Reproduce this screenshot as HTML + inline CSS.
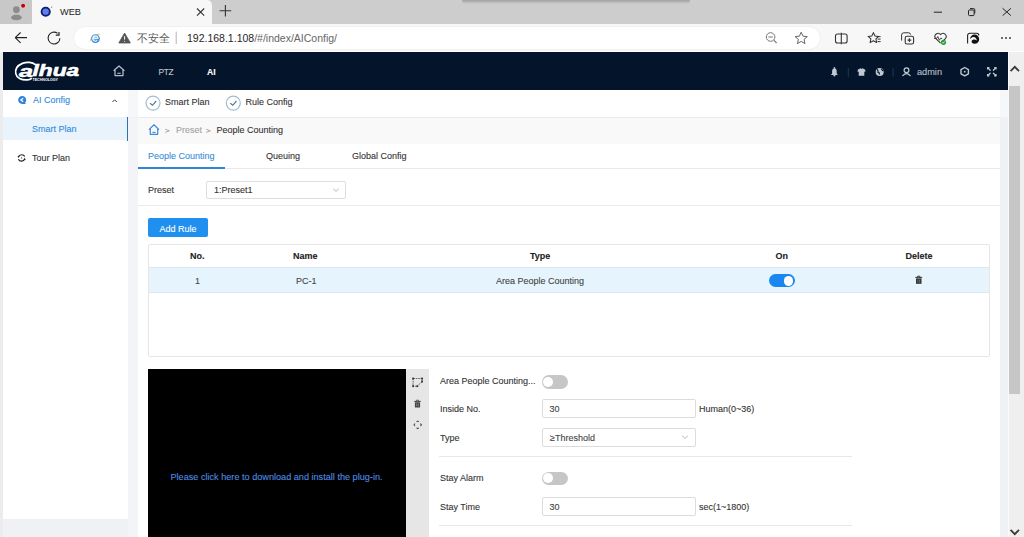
<!DOCTYPE html>
<html><head><meta charset="utf-8">
<style>
*{margin:0;padding:0;box-sizing:border-box}
html,body{width:1024px;height:537px;overflow:hidden;background:#f7f7f7;font-family:"Liberation Sans",sans-serif;color:#333}
.a{position:absolute}
.t{position:absolute;white-space:nowrap;line-height:1;font-size:9px;-webkit-text-stroke:0.1px currentColor}
svg{position:absolute;overflow:visible}
</style></head><body>
<!-- TAB BAR -->
<div class="a" style="left:0;top:0;width:1024px;height:24px;background:#cdcdcd"></div>
<div class="a" style="left:462px;top:0;width:228px;height:4px;background:linear-gradient(#a2a2a2,#cdcdcd);border-radius:0 0 4px 4px"></div>
<div class="a" style="left:0;top:0;width:32px;height:23.5px;background:#c8c8c8;border-radius:0 0 4px 0"></div>
<div class="a" style="left:32px;top:0;width:180px;height:24px;background:#f7f7f7;border-radius:0 5px 0 0"></div>
<svg style="left:0;top:0" width="60" height="24">
  <circle cx="16.4" cy="9.7" r="3.4" fill="#8c8c8c"/>
  <ellipse cx="16.4" cy="17.4" rx="5.4" ry="2.8" fill="#8c8c8c"/>
  <circle cx="23.1" cy="5.7" r="2.6" fill="#f0c8c8" opacity=".6"/><circle cx="23.1" cy="5.7" r="2" fill="#c8000c"/>
  <circle cx="45.7" cy="11.7" r="4.1" fill="#5f7ff0" stroke="#0d1f70" stroke-width="1.9"/>
  <circle cx="51.6" cy="7.1" r="0.7" fill="#777"/>
</svg>
<div class="t" style="left:60px;top:7.5px;font-size:9.2px;color:#222;-webkit-text-stroke:0">WEB</div>
<svg style="left:196px;top:7px" width="10" height="10"><path d="M1 1.5L8.2 8.7M8.2 1.5L1 8.7" stroke="#333" stroke-width="1.1"/></svg>
<svg style="left:218px;top:4px" width="14" height="14"><path d="M7.4 1V12.6M1.6 6.8H13.2" stroke="#333" stroke-width="1.1"/></svg>
<!-- window controls -->
<svg style="left:930px;top:5px" width="90" height="14">
  <path d="M3.8 7.2H12" stroke="#222" stroke-width="1"/>
  <rect x="38.5" y="5" width="5.6" height="5.6" rx="1" fill="none" stroke="#222" stroke-width="1"/>
  <path d="M40 3.6h3.6a1.2 1.2 0 0 1 1.2 1.2v3.6" fill="none" stroke="#222" stroke-width="1"/>
  <path d="M72.6 3.3L80.9 10.6M80.9 3.3L72.6 10.6" stroke="#222" stroke-width="1"/>
</svg>
<!-- toolbar -->
<div class="a" style="left:0;top:24px;width:1024px;height:28px;background:#f7f7f7"></div>
<div class="a" style="left:73.5px;top:27px;width:746px;height:21.5px;background:#fff;border-radius:11px;box-shadow:0 0 0 0.6px #e9e9e9"></div>
<div class="a" style="left:0;top:50.5px;width:1024px;height:1.5px;background:#fff"></div>
<svg style="left:0;top:24px" width="200" height="28">
  <path d="M15.2 13.6H27M15.2 13.6L20.6 8.5M15.2 13.6L20.6 18.9" fill="none" stroke="#222" stroke-width="1.1"/>
  <path d="M59.9 14.2A5.9 5.9 0 1 1 57.6 9.4" fill="none" stroke="#222" stroke-width="1.1"/>
  <path d="M59 8V11.2H55.8" fill="none" stroke="#222" stroke-width="1.2"/>
  <defs><radialGradient id="ieg" cx="0.4" cy="0.35" r="0.7"><stop offset="0" stop-color="#8fd0f8"/><stop offset="1" stop-color="#1f78c8"/></radialGradient></defs>
  <path d="M89.8 17.6Q91 10.4 100.2 10" fill="none" stroke="#e8c048" stroke-width="1" opacity=".75"/>
  <circle cx="95.4" cy="14.6" r="4.4" fill="url(#ieg)"/>
  <path d="M92.8 14.2H98A2.6 2.6 0 1 0 97.3 16.4" fill="none" stroke="#fff" stroke-width="1.1"/>
  <path d="M124.6 9L130.4 19H118.8Z" fill="#555" stroke="#555" stroke-width="0.8" stroke-linejoin="round"/>
  <path d="M124.6 12.2V15.6" stroke="#fff" stroke-width="1"/>
  <circle cx="124.6" cy="17.2" r="0.55" fill="#fff"/>
  <path d="M176.2 7.6V20" stroke="#aaa" stroke-width="0.9"/>
</svg>
<div class="t" style="left:137px;top:33px;font-size:10.5px;color:#5a5a5a;-webkit-text-stroke:0">不安全</div>
<div class="t" style="left:187px;top:33px;font-size:10.5px;color:#666;-webkit-text-stroke:0"><span style="color:#262626">192.168.1.108</span>/#/index/AIConfig/</div>
<svg style="left:760px;top:26px" width="264" height="24">
  <circle cx="10.6" cy="11" r="4.3" fill="none" stroke="#777" stroke-width="1"/>
  <path d="M8.4 11H12.8M13.8 14.2L16.6 17" stroke="#777" stroke-width="1.1"/>
  <path d="M41.2 6.2L43 10.2L47.3 10.6L44 13.4L45 17.6L41.2 15.4L37.4 17.6L38.4 13.4L35.1 10.6L39.4 10.2Z" fill="none" stroke="#666" stroke-width="1" stroke-linejoin="round"/>
  <rect x="75.5" y="8" width="11.6" height="9" rx="2" fill="none" stroke="#333" stroke-width="1.1"/>
  <path d="M81.3 6.8V18.2" stroke="#333" stroke-width="1.1"/>
  <path d="M113.4 6.6L115 10L118.7 10.4L115.9 12.9L116.7 16.6L113.4 14.7L110.1 16.6L110.9 12.9L108.1 10.4L111.8 10Z" fill="none" stroke="#333" stroke-width="1.05" stroke-linejoin="round"/>
  <path d="M116.8 10.6H120.6M117.6 13.1H120.6M117.6 15.6H120.6" stroke="#333" stroke-width="1"/>
  <path d="M141.6 14.6V9A2.2 2.2 0 0 1 143.8 6.8H148.6A2 2 0 0 1 150.6 8.6" fill="none" stroke="#333" stroke-width="1"/>
  <rect x="145.2" y="10.2" width="8.4" height="7.8" rx="1.8" fill="#f7f7f7" stroke="#333" stroke-width="1.1"/>
  <path d="M149.4 12.2V16M147.5 14.1H151.3" stroke="#333" stroke-width="1.1"/>
  <path d="M180.6 17.2L175.6 12.4A3 3 0 0 1 180.6 8.6A3 3 0 0 1 185.4 12.6L183.6 14.4" fill="none" stroke="#333" stroke-width="1.05" stroke-linejoin="round"/>
  <path d="M174.2 12.4H176.6L177.8 10.6L179.4 14.2L180.6 12.4H182.2" fill="none" stroke="#333" stroke-width="0.95"/>
  <circle cx="183.5" cy="16.3" r="2.6" fill="#2a9d3a"/>
  <path d="M182.3 16.3L183.2 17.2L184.7 15.5" fill="none" stroke="#fff" stroke-width="0.8"/>
  <path d="M207.6 17.6V9.4A2.2 2.2 0 0 1 209.8 7.2H216.6A2.2 2.2 0 0 1 218.8 9.4" fill="none" stroke="#222" stroke-width="1.1"/>
  <path d="M210 13.2A4.6 4.6 0 1 1 214.6 17.8C212.4 17.8 211.4 16.4 211.6 15C212.1 13.4 215.2 12.8 216.8 14.6C216.6 11.6 214 10.2 212 11.4C210.8 12 210.2 12.6 210 13.2Z" fill="#111"/>
  <circle cx="242" cy="12" r="0.95" fill="#333"/><circle cx="246" cy="12" r="0.95" fill="#333"/><circle cx="250" cy="12" r="0.95" fill="#333"/>
</svg>
<!-- PAGE -->
<div class="a" style="left:0;top:52px;width:3px;height:485px;background:#ececec"></div>
<div class="a" style="left:3px;top:52px;width:1005px;height:485px;background:#eff1f4"></div>
<div class="a" style="left:3px;top:52.3px;width:1005px;height:37.5px;background:#04152b"></div>
<!-- logo -->
<svg style="left:0;top:52px" width="100" height="38">
  <path d="M35.4 12.6C32.5 10 26.8 9.6 22.4 11.4C17.6 13.4 15 17.4 15.8 21.6C16.6 25.8 21.4 28.4 27.4 27.9C29 27.8 30.4 27.4 31.2 26.6" fill="none" stroke="#fff" stroke-width="1.7" stroke-linecap="round"/>
  <text x="19" y="24.8" font-family="Liberation Sans" font-weight="bold" font-style="italic" font-size="16.5" fill="#fff" stroke="#fff" stroke-width="0.5" textLength="14" lengthAdjust="spacingAndGlyphs">a</text>
  <text x="32.6" y="24.4" font-family="Liberation Sans" font-weight="bold" font-style="italic" font-size="17.2" fill="#fff" stroke="#fff" stroke-width="0.6" textLength="46.5" lengthAdjust="spacingAndGlyphs">lhua</text>
  <text x="32.5" y="29.4" font-family="Liberation Sans" font-weight="bold" font-size="3.2" fill="#fff" textLength="25.5" lengthAdjust="spacingAndGlyphs">TECHNOLOGY</text>
</svg>
<svg style="left:100px;top:52px" width="130" height="38">
  <path d="M13.6 18.8L19 14L24.4 18.8M15 17.6V23.6H23V17.6" fill="none" stroke="#b5bdc8" stroke-width="1.25" stroke-linejoin="round"/>
  <path d="M17.3 21.3H20.7" stroke="#b5bdc8" stroke-width="1.1"/>
</svg>
<div class="t" style="left:158.6px;top:68.2px;font-size:8.4px;letter-spacing:-0.45px;color:#bcc4cf">PTZ</div>
<div class="t" style="left:207px;top:68px;font-size:8.6px;color:#fff;font-weight:bold">AI</div>
<svg style="left:820px;top:52px" width="188" height="38">
  <path d="M14.4 16.2C12.7 16.2 12.1 17.8 12.1 19.6V21.6L10.9 23H17.9L16.7 21.6V19.6C16.7 17.8 16.1 16.2 14.4 16.2Z" fill="#c0c8d4"/>
  <circle cx="14.4" cy="15.9" r="0.8" fill="#c0c8d4"/><circle cx="14.4" cy="23.6" r="1" fill="#c0c8d4"/>
  <path d="M28.3 16V24.7" stroke="#27364a" stroke-width="1"/>
  <path d="M38 17.4L40.6 16.3Q41.5 17.3 42.4 16.3L45 17.4L45.6 19.4L44.3 19.8V23.8H38.7V19.8L37.4 19.4Z" fill="#c0c8d4"/>
  <circle cx="59.7" cy="19.9" r="4" fill="#c0c8d4"/>
  <path d="M57 17.2Q58.5 18.7 58 20.2Q59.6 20.5 59.6 22.4M61.4 16.8Q62.2 18.6 63.5 18.8" fill="none" stroke="#04152b" stroke-width="1.2"/>
  <path d="M73.1 16V24.7" stroke="#27364a" stroke-width="1"/>
  <circle cx="86.5" cy="18.3" r="2.4" fill="none" stroke="#c0c8d4" stroke-width="1.2"/>
  <path d="M82.8 23.6Q86.5 19.8 90.2 23.6" fill="none" stroke="#c0c8d4" stroke-width="1.2" stroke-linecap="round"/>
  <path d="M144.7 15.5L148.4 17.6V21.8L144.7 23.9L141 21.8V17.6Z" fill="none" stroke="#c0c8d4" stroke-width="1.4" stroke-linejoin="round"/>
  <circle cx="144.7" cy="19.7" r="0.9" fill="#c0c8d4"/>
  <path d="M167.6 15.6L170.2 18.2M176 15.6L173.4 18.2M167.6 23.8L170.2 21.2M176 23.8L173.4 21.2" stroke="#c0c8d4" stroke-width="1.3" stroke-linecap="round"/>
  <path d="M167.6 15.6H169.4M167.6 15.6V17.4M176 15.6H174.2M176 15.6V17.4M167.6 23.8H169.4M167.6 23.8V22M176 23.8H174.2M176 23.8V22" stroke="#c0c8d4" stroke-width="1.2"/>
</svg>
<div class="t" style="left:917px;top:67.5px;font-size:9.2px;color:#b8c0cc">admin</div>
<!-- scrollbar -->
<div class="a" style="left:1008px;top:52px;width:16px;height:485px;background:#efefef;border-left:1.5px solid #fafafa"></div>
<div class="a" style="left:1009.2px;top:85.5px;width:10.8px;height:308px;background:#c6c6c6"></div>
<svg style="left:1008px;top:52px" width="16" height="485">
  <path d="M2.6 19.2L6.8 14.8L11 19.2" fill="none" stroke="#3a3a3a" stroke-width="1.8"/>
  <path d="M2.6 477.8L6.8 482.2L11 477.8" fill="none" stroke="#3a3a3a" stroke-width="1.8"/>
</svg>
<!-- sidebar -->
<div class="a" style="left:3px;top:90px;width:125px;height:429px;background:#fff"></div>
<div class="a" style="left:3px;top:117px;width:125px;height:23px;background:#e9f3fc"></div>
<div class="a" style="left:126.5px;top:117px;width:1.5px;height:23.5px;background:#2f72b4"></div>
<svg style="left:0;top:90px" width="128" height="80">
  <path d="M22.2 6C24.6 6 26.2 7.8 26.2 10C26.2 11.2 25.7 12.2 25 12.9L26 13.9H22.2C19.8 13.9 18.2 12.1 18.2 10C18.2 7.8 19.8 6 22.2 6Z" fill="#2f82d9"/>
  <path d="M23.2 8.2L20.9 10L23.2 11.8" fill="none" stroke="#fff" stroke-width="1.2"/>
  <path d="M112.4 12L114.6 9.8L116.8 12" fill="none" stroke="#444" stroke-width="1"/>
  <path d="M18.4 66.8A3.5 3.3 0 0 1 24.8 66.6M24.8 69.1A3.5 3.3 0 0 1 18.4 69.3" fill="none" stroke="#222" stroke-width="1.2"/>
  <path d="M17.4 66.1L19.6 66.3L18.6 68.1ZM25.8 69.8L23.6 69.6L24.6 67.8Z" fill="#222"/>
  <path d="M21.4 67.2L21.8 68.6" stroke="#444" stroke-width="0.9"/>
</svg>
<div class="t" style="left:33px;top:96px;color:#2f8ae0">AI Config</div>
<div class="t" style="left:32px;top:125px;color:#2f8ae0">Smart Plan</div>
<div class="t" style="left:32px;top:154px;color:#333">Tour Plan</div>

<!-- step bar -->
<div class="a" style="left:128px;top:90px;width:880px;height:27px;background:#f6f7f9"></div>
<div class="a" style="left:138px;top:90px;width:862px;height:27px;background:#fff"></div>
<div class="a" style="left:138px;top:117px;width:862px;height:1.5px;background:#eaebee"></div>
<svg style="left:128px;top:90px" width="140" height="27">
  <circle cx="25" cy="13.1" r="7" fill="none" stroke="#a3bccf" stroke-width="1.2"/>
  <path d="M22 13.2L24.5 15.3L28.2 11" fill="none" stroke="#55769a" stroke-width="1.15"/>
  <circle cx="105.3" cy="13.1" r="7" fill="none" stroke="#a3bccf" stroke-width="1.2"/>
  <path d="M102.3 13.2L104.8 15.3L108.5 11" fill="none" stroke="#55769a" stroke-width="1.15"/>
</svg>
<div class="t" style="left:165px;top:98px;color:#333">Smart Plan</div>
<div class="t" style="left:245.5px;top:98px;color:#333">Rule Config</div>

<!-- main panel -->
<div class="a" style="left:128px;top:118px;width:10px;height:419px;background:#f3f4f7"></div>
<div class="a" style="left:138px;top:118px;width:862px;height:419px;background:#fff"></div>
<div class="a" style="left:138px;top:118px;width:862px;height:26px;background:#f9f9fa"></div>
<svg style="left:140px;top:118px" width="80" height="27">
  <path d="M9 11.6L14 6.8L19 11.6M10.3 10.4V16.3H17.7V10.4" fill="none" stroke="#3a8ad8" stroke-width="1.2" stroke-linejoin="round"/>
  <path d="M12.4 14.4H15.6" stroke="#3a8ad8" stroke-width="1.1"/>
  <path d="M25.2 11.2L29.4 12.8L25.2 14.4M66.2 11.2L70.4 12.8L66.2 14.4" fill="none" stroke="#a0a0a0" stroke-width="0.9"/>
</svg>
<div class="t" style="left:176px;top:126px;color:#a3a3a3">Preset</div>
<div class="t" style="left:216.5px;top:126px;color:#333">People Counting</div>

<div class="t" style="left:148px;top:151.5px;color:#3b8fd8">People Counting</div>
<div class="t" style="left:266px;top:151.5px;color:#333">Queuing</div>
<div class="t" style="left:352px;top:151.5px;color:#333">Global Config</div>
<div class="a" style="left:138px;top:168px;width:862px;height:1px;background:#e9e9e9"></div>
<div class="a" style="left:138px;top:167px;width:87px;height:2px;background:#2f86d6"></div>

<div class="t" style="left:148px;top:185.8px;color:#333">Preset</div>
<div class="a" style="left:206px;top:180.5px;width:140px;height:18px;border:1px solid #dddddd;border-radius:2px;background:#fff"></div>
<div class="t" style="left:214px;top:185.8px;color:#333">1:Preset1</div>
<svg style="left:330px;top:185px" width="12" height="10"><path d="M3.2 3.8L6 6.4L8.8 3.8" fill="none" stroke="#b0b0b0" stroke-width="0.9"/></svg>
<div class="a" style="left:138px;top:205px;width:862px;height:1px;background:#e9e9e9"></div>

<div class="a" style="left:148px;top:218px;width:59.5px;height:19px;background:#1f8ff0;border-radius:2px"></div>
<div class="t" style="left:159.5px;top:224.7px;color:#fff">Add Rule</div>

<!-- table -->
<div class="a" style="left:147.5px;top:244px;width:842.5px;height:113px;border:1px solid #e6e6e6;border-radius:2px"></div>
<div class="a" style="left:149px;top:267px;width:840px;height:26px;background:#e6f4fd;border-top:1px solid #dbe8f1;border-bottom:1px solid #dbe8f1"></div>
<div class="t" style="left:190px;top:251.8px;font-weight:bold;color:#222">No.</div>
<div class="t" style="left:293px;top:251.8px;font-weight:bold;color:#222">Name</div>
<div class="t" style="left:530px;top:251.8px;font-weight:bold;color:#222">Type</div>
<div class="t" style="left:775.5px;top:251.8px;font-weight:bold;color:#222">On</div>
<div class="t" style="left:905.5px;top:251.8px;font-weight:bold;color:#222">Delete</div>
<div class="t" style="left:195px;top:276.5px;color:#444">1</div>
<div class="t" style="left:296px;top:276.5px;color:#444">PC-1</div>
<div class="t" style="left:496px;top:276.5px;color:#444">Area People Counting</div>
<div class="a" style="left:768.5px;top:274px;width:26.5px;height:13.2px;background:#1a86ef;border-radius:7px"></div>
<div class="a" style="left:783.6px;top:276px;width:9.6px;height:9.6px;background:#fff;border-radius:50%"></div>
<svg style="left:905px;top:268px" width="30" height="24">
  <path d="M10.3 9.4H17.2" stroke="#333" stroke-width="1"/>
  <path d="M12.6 9.2V8.2H14.9V9.2" fill="none" stroke="#333" stroke-width="0.9"/>
  <rect x="11" y="10.4" width="5.5" height="5.4" fill="#333"/>
  <path d="M12.9 11.6V14.6M14.6 11.6V14.6" stroke="#888" stroke-width="0.7"/>
</svg>

<!-- video -->
<div class="a" style="left:148px;top:369px;width:258px;height:168px;background:#000"></div>
<div class="a" style="left:406px;top:369px;width:22.5px;height:168px;background:#e6e6e6"></div>
<svg style="left:406px;top:369px" width="23" height="70">
  <path d="M7.1 9.5V17.2H11.2L16.1 12.6V9.5Z" fill="none" stroke="#444" stroke-width="0.8" stroke-dasharray="1.6 0.8"/>
  <rect x="6.2" y="8.6" width="1.8" height="1.8" fill="#333"/><rect x="15.2" y="8.6" width="1.8" height="1.8" fill="#333"/>
  <rect x="6.2" y="16.3" width="1.8" height="1.8" fill="#333"/><rect x="10.4" y="16.3" width="1.8" height="1.8" fill="#333"/><rect x="15.2" y="11.7" width="1.8" height="1.8" fill="#333"/>
  <path d="M8.2 32.4H14.8" stroke="#444" stroke-width="1"/>
  <path d="M10.4 32.1V31.2H12.6V32.1" fill="none" stroke="#444" stroke-width="0.8"/>
  <rect x="8.9" y="33.3" width="5.2" height="5.2" rx="0.5" fill="#444"/>
  <path d="M10.7 34.5V37.3M12.3 34.5V37.3" stroke="#aaa" stroke-width="0.6"/>
  <path d="M10.4 52.6A3.4 3.4 0 0 1 13 52.6M14.6 54.4A3.4 3.4 0 0 1 14.6 57.2M13 59A3.4 3.4 0 0 1 10.4 59M8.8 57.2A3.4 3.4 0 0 1 8.8 54.4" fill="none" stroke="#444" stroke-width="0.85"/>
  <path d="M11.7 51.4L10.6 52.6H12.8ZM11.7 60.2L10.6 59H12.8ZM7.3 55.8L8.5 54.7V56.9ZM16.1 55.8L14.9 54.7V56.9Z" fill="#444"/>
</svg>
<div class="t" style="left:170.5px;top:473px;font-size:9.15px;color:#4e8ce0">Please click here to download and install the plug-in.</div>

<!-- form -->
<div class="t" style="left:440px;top:376.7px;color:#333">Area People Counting...</div>
<div class="a" style="left:542.2px;top:375px;width:25.5px;height:13.6px;background:#c6c6c6;border-radius:7px"></div>
<div class="a" style="left:543.2px;top:376.9px;width:9.8px;height:9.8px;background:#fff;border-radius:50%"></div>
<div class="t" style="left:440px;top:404.6px;color:#333">Inside No.</div>
<div class="a" style="left:542px;top:399.3px;width:154px;height:18.4px;border:1px solid #dcdcdc;border-radius:2px"></div>
<div class="t" style="left:549.5px;top:404.6px;color:#444">30</div>
<div class="t" style="left:699px;top:404.6px;color:#333">Human(0~36)</div>
<div class="t" style="left:440px;top:433.6px;color:#333">Type</div>
<div class="a" style="left:542px;top:428px;width:154px;height:19px;border:1px solid #dcdcdc;border-radius:2px"></div>
<div class="t" style="left:550px;top:433.6px;color:#444">≥Threshold</div>
<svg style="left:679px;top:432px" width="12" height="10"><path d="M3.2 3.8L6 6.4L8.8 3.8" fill="none" stroke="#b0b0b0" stroke-width="0.9"/></svg>
<div class="a" style="left:439px;top:456px;width:413px;height:1px;background:#e8e8e8"></div>
<div class="t" style="left:440px;top:473.6px;color:#333">Stay Alarm</div>
<div class="a" style="left:542.2px;top:471.5px;width:25.5px;height:13.6px;background:#c6c6c6;border-radius:7px"></div>
<div class="a" style="left:543.2px;top:473.4px;width:9.8px;height:9.8px;background:#fff;border-radius:50%"></div>
<div class="t" style="left:440px;top:502.5px;color:#333">Stay Time</div>
<div class="a" style="left:542px;top:497px;width:154px;height:19px;border:1px solid #dcdcdc;border-radius:2px"></div>
<div class="t" style="left:549.5px;top:502.5px;color:#444">30</div>
<div class="t" style="left:699px;top:502.5px;color:#333">sec(1~1800)</div>
<div class="a" style="left:439px;top:525px;width:413px;height:1px;background:#e8e8e8"></div>
</body></html>
